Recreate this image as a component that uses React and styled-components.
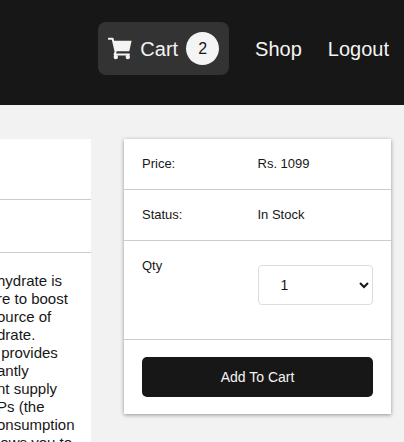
import React, { useState } from "react";
import styled, { createGlobalStyle } from "styled-components";

const GlobalStyle = createGlobalStyle`
  *, *::before, *::after { box-sizing: border-box; }
  body {
    margin: 0;
    background: #f2f2f2;
    color: #171717;
    font-family: "Liberation Sans", Arial, sans-serif;
  }
`;

const Page = styled.div`
  min-height: 100vh;
  overflow: hidden;
`;

const Header = styled.header`
  display: flex;
  align-items: center;
  justify-content: flex-end;
  padding: 22px 15px 30px;
  background: #171717;
`;

const Nav = styled.nav`
  display: flex;
  align-items: center;
  gap: 26px;
`;

const NavLink = styled.a`
  color: #f4f4f4;
  font-size: 20px;
  line-height: 24px;
  text-decoration: none;
`;

const CartLink = styled(NavLink)`
  display: flex;
  align-items: center;
  gap: 8px;
  padding: 10px;
  border-radius: 8px;
  background: #333;
`;

const CartIcon = styled.svg`
  width: 24px;
  height: 24px;
`;

const CartCount = styled.span`
  width: 33px;
  height: 33px;
  border-radius: 50%;
  background: #f4f4f4;
  color: #171717;
  font-size: 16px;
  line-height: 33px;
  text-align: center;
`;

const Content = styled.main`
  display: grid;
  grid-template-columns: minmax(0, 91fr) minmax(0, 267fr);
  align-items: start;
  gap: 33px;
  padding: 34px 13px 0 0;
`;

const Details = styled.section`
  overflow: hidden;
  background: #fff;
`;

const DetailsBand = styled.div`
  height: ${({ $tall }) => ($tall ? "61px" : "53px")};
  border-bottom: 1px solid #ccc;
`;

const Description = styled.p`
  margin: 0 0 0 -3px;
  padding: 19px 0;
  font-size: 15px;
  line-height: 18px;
  white-space: pre;
`;

const Card = styled.section`
  background: #fff;
  box-shadow: 0 1px 4px rgba(0, 0, 0, 0.4);
`;

const Row = styled.div`
  display: grid;
  grid-template-columns: 1fr 1fr;
  min-height: ${({ $tall }) => ($tall ? "99px" : "51px")};
  padding: 16px 18px;
  border-bottom: 1px solid #ccc;
  font-size: 13px;
  line-height: 18px;
`;

const QtySelect = styled.select`
  width: 100%;
  height: 40px;
  margin-top: 8px;
  padding: 0 0 0 18px;
  border: 1px solid #ddd;
  border-radius: 4px;
  background: #fff;
  color: #171717;
  font: 14px "Liberation Sans", Arial, sans-serif;
`;

const Actions = styled.div`
  padding: 17px 18px;
`;

const AddButton = styled.button`
  display: block;
  width: 100%;
  height: 40px;
  border: 0;
  border-radius: 5px;
  background: #171717;
  color: #f4f4f4;
  font: 14px "Liberation Sans", Arial, sans-serif;
`;

const description = [
  "hydrate is",
  "re to boost",
  "ource of",
  "drate.",
  " provides",
  "antly",
  "nt supply",
  "Ps (the",
  "onsumption",
  "lows you to",
];

export default function App() {
  const [qty, setQty] = useState("1");
  return (
    <Page>
      <GlobalStyle />
      <Header>
        <Nav>
          <CartLink href="#cart">
            <CartIcon viewBox="0 0 24 24" fill="none" aria-hidden="true">
              <path d="M5 3.8H23.6L21.3 14.3H7.3Z" fill="currentColor" />
              <path
                d="M0.8 1.7H4.6L7.6 14.6L6.6 17.6H21"
                stroke="currentColor"
                strokeWidth="2"
                strokeLinejoin="round"
                strokeLinecap="round"
              />
              <circle cx="7.8" cy="20" r="2.2" fill="currentColor" />
              <circle cx="19.8" cy="20" r="2.2" fill="currentColor" />
            </CartIcon>
            Cart
            <CartCount>2</CartCount>
          </CartLink>
          <NavLink href="#shop">Shop</NavLink>
          <NavLink href="#logout">Logout</NavLink>
        </Nav>
      </Header>
      <Content>
        <Details>
          <DetailsBand $tall />
          <DetailsBand />
          <Description>{description.join("\n")}</Description>
        </Details>
        <Card>
          <Row>
            <span>Price:</span>
            <span>Rs. 1099</span>
          </Row>
          <Row>
            <span>Status:</span>
            <span>In Stock</span>
          </Row>
          <Row $tall>
            <label htmlFor="qty">Qty</label>
            <QtySelect id="qty" value={qty} onChange={(e) => setQty(e.target.value)}>
              <option>1</option>
              <option>2</option>
              <option>3</option>
              <option>4</option>
            </QtySelect>
          </Row>
          <Actions>
            <AddButton type="button">Add To Cart</AddButton>
          </Actions>
        </Card>
      </Content>
    </Page>
  );
}
